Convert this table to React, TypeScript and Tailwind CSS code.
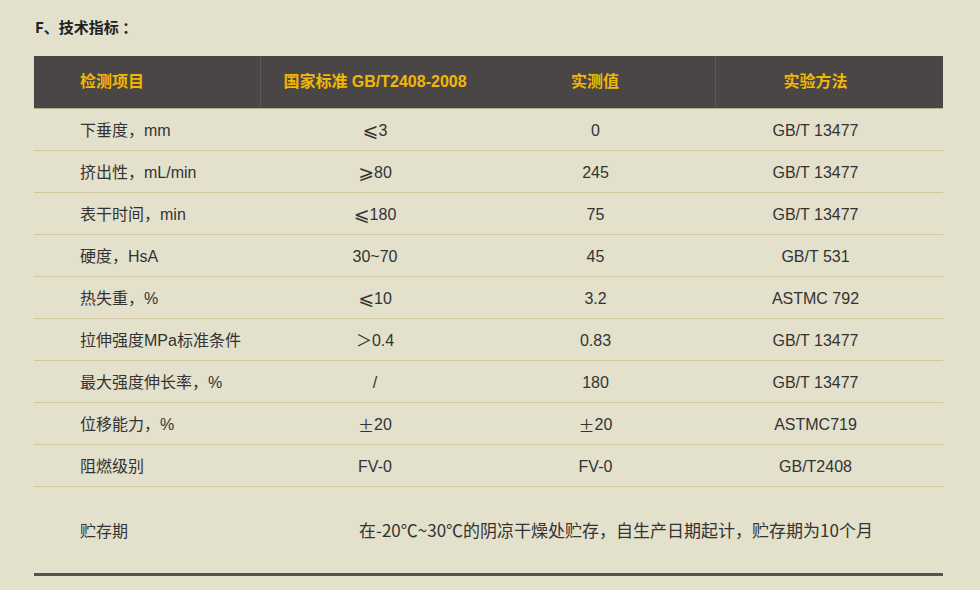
const cjk = '"Noto Sans CJK SC", "DejaVu Sans", sans-serif';

const Sym = ({ c }: { c: string }) => (
  <span className="text-[19px] leading-none" style={{ fontFamily: '"DejaVu Sans", sans-serif' }}>
    {c}
  </span>
);
const Pm = () => <span style={{ fontFamily: cjk }}>±</span>;

const rows: [string, React.ReactNode, React.ReactNode, string][] = [
  ["下垂度，mm", <><Sym c="⩽" />3</>, "0", "GB/T 13477"],
  ["挤出性，mL/min", <><Sym c="⩾" />80</>, "245", "GB/T 13477"],
  ["表干时间，min", <><Sym c="⩽" />180</>, "75", "GB/T 13477"],
  ["硬度，HsA", "30~70", "45", "GB/T 531"],
  ["热失重，%", <><Sym c="⩽" />10</>, "3.2", "ASTMC 792"],
  ["拉伸强度MPa标准条件", "＞0.4", "0.83", "GB/T 13477"],
  ["最大强度伸长率，%", "/", "180", "GB/T 13477"],
  ["位移能力，%", <><Pm />20</>, <><Pm />20</>, "ASTMC719"],
  ["阻燃级别", "FV-0", "FV-0", "GB/T2408"],
];

const cols = "grid grid-cols-[227px_228px_227px_227px]";

export default function App() {
  return (
    <div
      className="w-[980px] h-[590px] bg-[#e3e0cc] text-[#333] overflow-hidden"
      style={{ fontFamily: '"Liberation Sans", "Noto Sans CJK SC", sans-serif' }}
    >
      <div
        className="pl-[35px] pt-[16px] h-[56px] text-[15px] font-bold text-[#222]"
        style={{ fontFamily: cjk }}
      >
        F、技术指标 ：
      </div>
      <div className="ml-[34px] w-[909px]">
        <div className={`${cols} h-[53px] bg-[#4b4646] text-[#f2b705] text-[16px] font-bold border-b border-[#b9ad90]`}>
          <div className="flex items-center pl-[46px] border-r border-[#5e5958]">检测项目</div>
          <div className="flex items-center justify-center">国家标准 GB/T2408-2008</div>
          <div className="flex items-center justify-center pr-[14px] border-r border-[#5e5958]">实测值</div>
          <div className="flex items-center justify-center pr-[28px]">实验方法</div>
        </div>
        {rows.map((r) => (
          <div key={r[0]} className={`${cols} h-[42px] text-[16px] border-b border-[#d3c7a0]`}>
            <div className="flex items-center pl-[46px] pt-[2px]">{r[0]}</div>
            <div className="flex items-center justify-center pt-[2px]">{r[1]}</div>
            <div className="flex items-center justify-center pr-[14px] pt-[2px]">{r[2]}</div>
            <div className="flex items-center justify-center pr-[28px] pt-[2px]">{r[3]}</div>
          </div>
        ))}
        <div
          className="flex items-center h-[89px] border-b-[3px] border-[#555250]"
          style={{ fontFamily: cjk }}
        >
          <div className="w-[325px] pl-[46px] text-[16px]">贮存期</div>
          <div className="text-[17px]">在-20℃~30℃的阴凉干燥处贮存，自生产日期起计，贮存期为10个月</div>
        </div>
      </div>
    </div>
  );
}
